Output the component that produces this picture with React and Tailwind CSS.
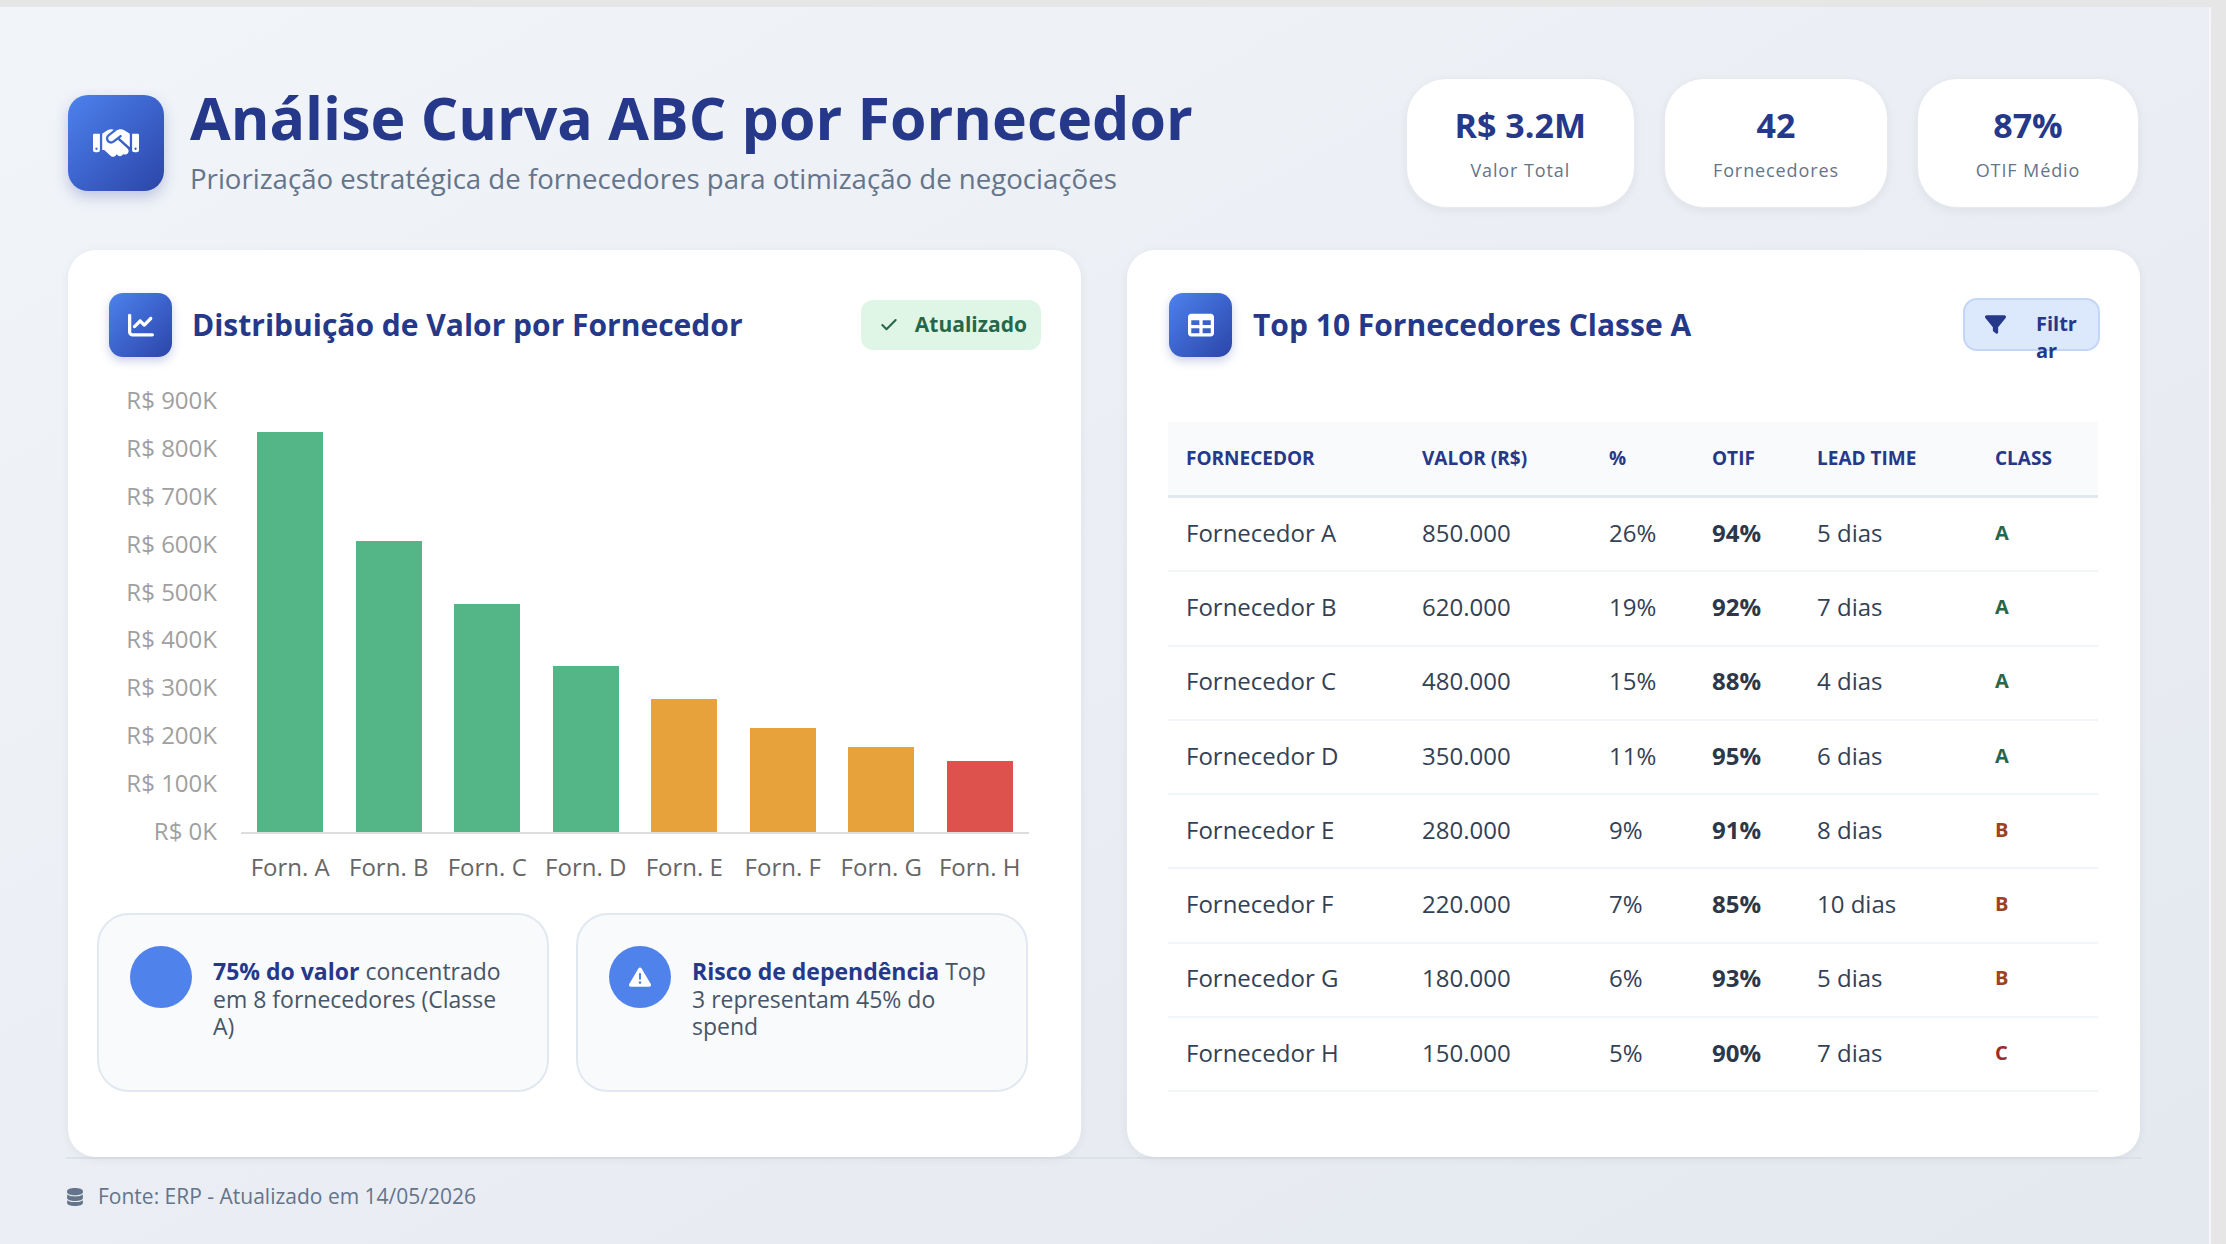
import React from "react";
import {
  FaHandshake,
  FaChartLine,
  FaTable,
  FaFilter,
  FaDatabase,
  FaTriangleExclamation,
} from "react-icons/fa6";
import { Check } from "lucide-react";

const yLabels = ["R$ 900K", "R$ 800K", "R$ 700K", "R$ 600K", "R$ 500K", "R$ 400K", "R$ 300K", "R$ 200K", "R$ 100K", "R$ 0K"];

const bars = [
  { label: "Forn. A", h: 400, color: "bg-[#54b687]" },
  { label: "Forn. B", h: 291, color: "bg-[#54b687]" },
  { label: "Forn. C", h: 228, color: "bg-[#54b687]" },
  { label: "Forn. D", h: 166, color: "bg-[#54b687]" },
  { label: "Forn. E", h: 133, color: "bg-[#e8a23b]" },
  { label: "Forn. F", h: 104, color: "bg-[#e8a23b]" },
  { label: "Forn. G", h: 85, color: "bg-[#e8a23b]" },
  { label: "Forn. H", h: 71, color: "bg-[#dd524d]" },
];

const rows = [
  ["Fornecedor A", "850.000", "26%", "94%", "5 dias", "A"],
  ["Fornecedor B", "620.000", "19%", "92%", "7 dias", "A"],
  ["Fornecedor C", "480.000", "15%", "88%", "4 dias", "A"],
  ["Fornecedor D", "350.000", "11%", "95%", "6 dias", "A"],
  ["Fornecedor E", "280.000", "9%", "91%", "8 dias", "B"],
  ["Fornecedor F", "220.000", "7%", "85%", "10 dias", "B"],
  ["Fornecedor G", "180.000", "6%", "93%", "5 dias", "B"],
  ["Fornecedor H", "150.000", "5%", "90%", "7 dias", "C"],
];

const classColor = {
  A: "text-[#276749]",
  B: "text-[#9c4221]",
  C: "text-[#9b2c2c]",
};

const cols = "grid grid-cols-[237px_186px_103px_105px_178px_121px]";

const Stat = ({ value, label }) => (
  <div className="h-[130px] min-w-[222px] px-12 rounded-[40px] bg-white border border-[#e6eaf0] shadow-[0_3px_10px_rgba(30,41,59,0.06)] flex flex-col items-center justify-center">
    <div className="text-[34px] leading-[40px] font-bold text-[#25388a]">{value}</div>
    <div className="mt-[13px] text-[18px] leading-[24px] tracking-[0.05em] text-[#64748b]">{label}</div>
  </div>
);

const PanelIcon = ({ children }) => (
  <div className="w-[63px] h-[64px] rounded-[14px] bg-gradient-to-br from-[#4d82ee] to-[#2c45a9] flex items-center justify-center text-white shadow-[0_4px_10px_rgba(44,69,169,0.25)]">
    {children}
  </div>
);

const App = () => {
  return (
    <div className="w-full h-[1244px] bg-[#e6e6e6] pt-[7px] flex overflow-hidden font-['Open_Sans',sans-serif]">
      <div className="w-[2211px] h-full border-r-2 border-[#f6f6f6] bg-gradient-to-br from-[#f1f4f8] to-[#e4e8ef] px-[68px] pt-[71px]">
        {/* header */}
        <div className="flex items-center justify-between">
          <div className="flex items-center gap-[26px]">
            <div className="w-[96px] h-[96px] rounded-[20px] bg-gradient-to-br from-[#4d82ee] to-[#2c45a9] flex items-center justify-center text-white shadow-[0_6px_14px_rgba(44,69,169,0.25)]">
              <FaHandshake size={46} />
            </div>
            <div className="-mt-[6px]">
              <h1 className="text-[59px] leading-[67px] font-bold text-[#25388a]">
                Análise Curva ABC por Fornecedor
              </h1>
              <p className="mt-[9px] text-[27.6px] leading-[36px] text-[#64748b]">
                Priorização estratégica de fornecedores para otimização de negociações
              </p>
            </div>
          </div>
          <div className="flex gap-[29px] mr-[2px]">
            <Stat value="R$ 3.2M" label="Valor Total" />
            <Stat value="42" label="Fornecedores" />
            <Stat value="87%" label="OTIF Médio" />
          </div>
        </div>

        {/* panels */}
        <div className="mt-[42px] grid grid-cols-2 gap-[46px] w-[2072px]">
          {/* chart panel */}
          <div className="h-[907px] bg-white rounded-[28px] shadow-[0_2px_10px_rgba(30,41,59,0.06)] pl-[41px] pr-[40px] pt-[43px]">
            <div className="flex items-center justify-between">
              <div className="flex items-center gap-[20px]">
                <PanelIcon>
                  <FaChartLine size={26} />
                </PanelIcon>
                <h2 className="text-[30px] font-bold text-[#25388a] -mt-[2px]">Distribuição de Valor por Fornecedor</h2>
              </div>
              <div className="h-[50px] pl-[18px] pr-[14px] rounded-[12px] bg-[#dff6e6] flex items-center gap-[16px] text-[#276749]">
                <Check size={20} strokeWidth={2.5} />
                <span className="text-[21px] font-bold">Atualizado</span>
              </div>
            </div>

            <div className="mt-[28px] flex">
              <div className="w-[108px] h-[461px] flex flex-col justify-between items-end">
                {yLabels.map((l) => (
                  <div key={l} className="text-[24px] leading-[30px] text-[#a0a0a0]">{l}</div>
                ))}
              </div>
              <div className="ml-[24px] w-[788px]">
                <div className="h-[449px] border-b-2 border-[#dddddd] flex items-end">
                  {bars.map((b) => (
                    <div key={b.label} className="flex-1 flex justify-center">
                      <div className={`w-[66px] ${b.color}`} style={{ height: b.h }} />
                    </div>
                  ))}
                </div>
                <div className="mt-[18px] flex">
                  {bars.map((b) => (
                    <div key={b.label} className="flex-1 text-center text-[24px] leading-[30px] text-[#666666]">
                      {b.label}
                    </div>
                  ))}
                </div>
              </div>
            </div>

            <div className="mt-[31px] -ml-3 mr-[13px] grid grid-cols-2 gap-[27px]">
              <div className="h-[179px] rounded-[32px] bg-[#f8fafc] border-2 border-[#e2e8f0] p-[31px] flex items-start gap-[21px]">
                <div className="w-[62px] h-[62px] shrink-0 rounded-full bg-[#4f82ea]" />
                <p className="pt-[12px] text-[23px] leading-[27.5px] text-[#475569]">
                  <span className="font-bold text-[#25388a]">75% do valor</span> concentrado em 8 fornecedores (Classe A)
                </p>
              </div>
              <div className="h-[179px] rounded-[32px] bg-[#f8fafc] border-2 border-[#e2e8f0] p-[31px] flex items-start gap-[21px]">
                <div className="w-[62px] h-[62px] shrink-0 rounded-full bg-[#4f82ea] flex items-center justify-center text-white">
                  <FaTriangleExclamation size={22} />
                </div>
                <p className="pt-[12px] text-[23px] leading-[27.5px] text-[#475569]">
                  <span className="font-bold text-[#25388a]">Risco de dependência</span> Top 3 representam 45% do spend
                </p>
              </div>
            </div>
          </div>

          {/* table panel */}
          <div className="h-[907px] bg-white rounded-[28px] shadow-[0_2px_10px_rgba(30,41,59,0.06)] pl-[42px] pr-[40px] pt-[43px]">
            <div className="flex items-start justify-between">
              <div className="flex items-center gap-[21px]">
                <PanelIcon>
                  <FaTable size={26} />
                </PanelIcon>
                <h2 className="text-[30px] font-bold text-[#25388a] -mt-[2px]">Top 10 Fornecedores Classe A</h2>
              </div>
              <button className="mt-[5px] w-[137px] h-[53px] rounded-[14px] bg-[#dce8fc] border-2 border-[#c3d6f8] pl-[20px] pt-[10px] flex items-start gap-[30px] text-[#25388a]">
                <FaFilter size={21} className="mt-[4px] shrink-0" />
                <span className="w-[46px] break-all text-left text-[20px] leading-[27px] font-bold">Filtrar</span>
              </button>
            </div>

            <div className="mt-[65px] w-[930px] -ml-px">
              <div className={`${cols} h-[76px] items-center bg-[#f8fafc] border-b-[3px] border-[#e2e8f0] text-[19px] font-bold uppercase text-[#25388a]`}>
                <div className="pl-[18px]">Fornecedor</div>
                <div className="pl-[17px]">Valor (R$)</div>
                <div className="pl-[18px]">%</div>
                <div className="pl-[18px]">OTIF</div>
                <div className="pl-[18px]">Lead Time</div>
                <div className="pl-[18px]">Class</div>
              </div>
              {rows.map((r) => (
                <div key={r[0]} className={`${cols} h-[74.3px] items-center border-b-2 border-[#f1f4f8] text-[24px] text-[#334155]`}>
                  <div className="pl-[18px] -mt-[3px]">{r[0]}</div>
                  <div className="pl-[17px] -mt-[3px]">{r[1]}</div>
                  <div className="pl-[18px] -mt-[3px]">{r[2]}</div>
                  <div className="pl-[18px] -mt-[3px] font-bold text-[#2d3748]">{r[3]}</div>
                  <div className="pl-[18px] -mt-[3px]">{r[4]}</div>
                  <div className={`pl-[18px] -mt-[3px] text-[20px] font-bold ${classColor[r[5]]}`}>{r[5]}</div>
                </div>
              ))}
            </div>
          </div>
        </div>

        {/* footer */}
        <div className="w-[2076px] -ml-[2px] border-t-2 border-[#dde2ea] pt-[22px] flex items-center gap-[14px] text-[#64748b]">
          <FaDatabase size={18} />
          <span className="text-[21px]">Fonte: ERP - Atualizado em 14/05/2026</span>
        </div>
      </div>
    </div>
  );
};

export default App;
